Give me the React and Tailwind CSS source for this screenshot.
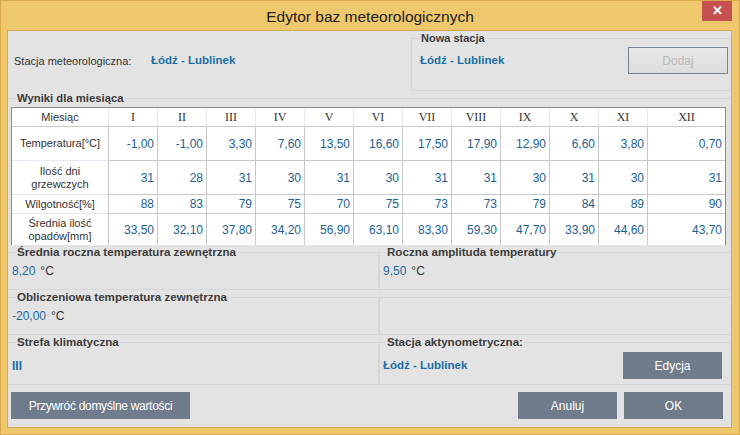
import React from "react";

const months = ["I", "II", "III", "IV", "V", "VI", "VII", "VIII", "IX", "X", "XI", "XII"];

const rows = [
  { label: ["Temperatura[°C]"], h: "h-[34px]", values: ["-1,00", "-1,00", "3,30", "7,60", "13,50", "16,60", "17,50", "17,90", "12,90", "6,60", "3,80", "0,70"] },
  { label: ["Ilość dni", "grzewczych"], h: "h-[34px]", values: ["31", "28", "31", "30", "31", "30", "31", "31", "30", "31", "30", "31"] },
  { label: ["Wilgotność[%]"], h: "h-[19px]", values: ["88", "83", "79", "75", "70", "75", "73", "73", "79", "84", "89", "90"] },
  { label: ["Średnia ilość", "opadów[mm]"], h: "h-[33px]", values: ["33,50", "32,10", "37,80", "34,20", "56,90", "63,10", "83,30", "59,30", "47,70", "33,90", "44,60", "43,70"] },
];

const Button = ({ children, className = "" }) => (
  <button className={`h-[27px] bg-[#707b8b] text-white text-[12px] ${className}`}>{children}</button>
);

const Group = ({ title, className = "", children, legendClass = "ml-[4px] text-[11.6px]" }) => (
  <fieldset className={`border border-[#d6d6d6] min-w-0 ${className}`}>
    <legend className={`${legendClass} px-[1px] leading-[14px] font-bold text-[#3c3c3c]`}>{title}</legend>
    {children}
  </fieldset>
);

const Temp = ({ value }) => (
  <div className="mt-[5px] flex items-center gap-[5px] text-[12px] leading-[14px]">
    <span className="text-[#1d6a9e]">{value}</span>
    <span className="text-[#333]">°C</span>
  </div>
);

export default function App() {
  return (
    <div className="w-[740px] h-[435px] bg-[#efc76c] border border-[#d8aa4c] flex flex-col font-['Liberation_Sans',Arial,sans-serif] text-[#333] overflow-hidden">
      {/* Title bar */}
      <div className="h-[29px] grid grid-cols-[1fr_auto_1fr] shrink-0">
        <div />
        <div className="self-center pt-[2px] text-[15.5px] text-[#222]">Edytor baz meteorologicznych</div>
        <div className="justify-self-end self-start mr-[7px]">
          <div className="w-[30px] h-[20px] bg-[#c75050] text-white text-[13px] font-bold flex items-center justify-center">✕</div>
        </div>
      </div>

      {/* Content */}
      <div className="flex-1 ml-[6px] mr-[7px] mb-[6px] border border-[#d4ab52] bg-[#e3e3e3] flex flex-col">
        {/* Top row */}
        <div className="h-[60px] flex shrink-0">
          <div className="flex-1 flex items-center pl-[6px] text-[11px]">
            <span className="w-[137px]">Stacja meteorologiczna:</span>
            <span className="font-bold text-[11.5px] text-[#1b6fa3]">Łódź - Lublinek</span>
          </div>
          <Group title="Nowa stacja" className="w-[320px] h-[60px] pl-[8px] pr-[3px] border-r-0" legendClass="ml-[0px] text-[11px]">
            <div className="mt-[2px] flex items-center justify-between">
              <span className="text-[11.5px] font-bold text-[#1b6fa3]">Łódź - Lublinek</span>
              <div className="w-[100px] h-[27px] border border-[#7a8594] bg-gradient-to-b from-[#e8e8e8] to-[#dcdcdc] text-[#b8b8b8] text-[12px] flex items-center justify-center">
                Dodaj
              </div>
            </div>
          </Group>
        </div>

        {/* Monthly results */}
        <fieldset className="border-0 border-t border-[#d6d6d6] min-w-0 shrink-0">
          <legend className="ml-[8px] px-[1px] text-[11.3px] leading-[14px] font-bold text-[#3c3c3c]">Wyniki dla miesiąca</legend>
          <div className="mt-[2px] ml-[3px] w-[715px] h-[138px] overflow-hidden border border-b-0 border-[#8a8a8a] bg-white">
            <div className="grid grid-cols-[97px_repeat(11,49px)_1fr]">
              <div className="h-[19px] border-r border-b border-r-[#e4e8f0] border-b-[#c8c8c8] flex items-center justify-center text-[11px]">Miesiąc</div>
              {months.map((m, i) => (
                <div
                  key={m}
                  className={`h-[19px] border-b border-b-[#c8c8c8] flex items-center justify-center text-[12px] font-['Liberation_Serif',serif] text-[#333] ${i < 11 ? "border-r border-r-[#e4e8f0]" : ""}`}
                >
                  {m}
                </div>
              ))}
              {rows.map((row) => (
                <React.Fragment key={row.label[0]}>
                  <div className={`${row.h} border-r border-b border-r-[#c8c8c8] border-b-[#e4e8f0] flex flex-col items-center justify-center text-[11px] leading-[13px] text-center`}>
                    {row.label.map((l) => (
                      <span key={l}>{l}</span>
                    ))}
                  </div>
                  {row.values.map((v, i) => (
                    <div
                      key={i}
                      className={`${row.h} border-b border-[#c8c8c8] flex items-center justify-end pr-[3px] text-[12px] text-[#1c5f92] ${i < 11 ? "border-r" : ""}`}
                    >
                      {v}
                    </div>
                  ))}
                </React.Fragment>
              ))}
            </div>
          </div>
        </fieldset>

        {/* Summary panels */}
        <div className="grid grid-cols-[371px_1fr] grid-rows-[45px_45px_50px] shrink-0">
          <Group title="Średnia roczna temperatura zewnętrzna" className="pl-[4px] border-l-0">
            <Temp value="8,20" />
          </Group>
          <Group title="Roczna amplituda temperatury" className="pl-[3px] border-r-0" legendClass="ml-[3px] text-[11.6px]">
            <Temp value="9,50" />
          </Group>
          <Group title="Obliczeniowa temperatura zewnętrzna" className="pl-[4px] border-l-0">
            <Temp value="-20,00" />
          </Group>
          <fieldset className="border border-r-0 border-[#d6d6d6] mt-[7px]" />
          <Group title="Strefa klimatyczna" className="pl-[4px] border-l-0">
            <div className="mt-[3px] h-[27px] flex items-center text-[12px] font-bold text-[#1b6fa3]">III</div>
          </Group>
          <Group title="Stacja aktynometryczna:" className="pl-[3px] pr-[9px] border-r-0" legendClass="ml-[3px] text-[11.6px]">
            <div className="mt-[3px] flex items-center justify-between">
              <span className="text-[11.5px] font-bold text-[#1b6fa3]">Łódź - Lublinek</span>
              <Button className="w-[99px]">Edycja</Button>
            </div>
          </Group>
        </div>

        {/* Bottom buttons */}
        <div className="mt-[7px] flex items-center pl-[3px] pr-[8px]">
          <Button className="w-[179px] text-[11.5px] tracking-[-0.3px]">Przywróć domyślne wartości</Button>
          <div className="ml-auto flex gap-[7px]">
            <Button className="w-[99px]">Anuluj</Button>
            <Button className="w-[99px]">OK</Button>
          </div>
        </div>
      </div>
    </div>
  );
}
